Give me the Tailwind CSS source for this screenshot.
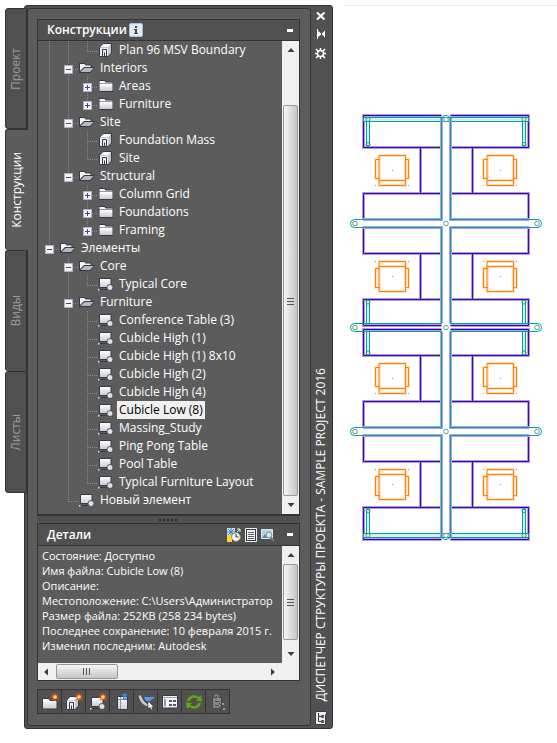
<!DOCTYPE html>
<html lang="ru">
<head>
    <meta charset="UTF-8">
    <meta name="viewport" content="width=device-width, initial-scale=1.0">
    <title>Диспетчер структуры проекта</title>
    <script src="https://cdn.jsdelivr.net/npm/@tailwindcss/browser@4"></script>
</head>
<body class="bg-white font-['Open_Sans','Noto_Sans',sans-serif] text-[12px] leading-[18px] text-white">
    <!-- Icon sprite -->
    <svg class="absolute size-0" aria-hidden="true">
        <defs>
            <linearGradient id="paper" x1="0" y1="0" x2="0" y2="1">
                <stop offset="0" stop-color="#ffffff"/><stop offset="1" stop-color="#c9cbd0"/>
            </linearGradient>
            <!-- Tree guides -->
            <symbol id="g-v" viewBox="0 0 19 18"><path d="M9.5 0V18" stroke="#8a8a8a" stroke-dasharray="1 1"/></symbol>
            <symbol id="g-t" viewBox="0 0 19 18"><path d="M9.5 0V18M10 10.5H19" stroke="#8a8a8a" stroke-dasharray="1 1"/></symbol>
            <symbol id="g-l" viewBox="0 0 19 18"><path d="M9.5 0V11M10 10.5H19" stroke="#8a8a8a" stroke-dasharray="1 1"/></symbol>
            <symbol id="t-minus" viewBox="0 0 9 9"><path d="M.5.5h8v8h-8z" fill="#f4f4f4" stroke="#b4b4b4"/><path d="M2 4.5h5" stroke="#2b4b9b"/></symbol>
            <symbol id="t-plus" viewBox="0 0 9 9"><path d="M.5.5h8v8h-8z" fill="#f4f4f4" stroke="#b4b4b4"/><path d="M2 4.5h5M4.5 2v5" stroke="#2b4b9b"/></symbol>
            <!-- Tree items -->
            <symbol id="i-open" viewBox="0 0 16 16">
                <path d="M0 13V3h6l1 1.500h5.500V7H16l-4.500 6z" fill="#353b47"/>
                <path d="M1 11V4h4.500l1 1.500h5V7H5z" fill="#f4f5f7"/>
                <path d="M5.500 8h9L11 12H1.500z" fill="#b4b8c0"/>
            </symbol>
            <symbol id="i-folder" viewBox="0 0 16 16">
                <path d="M1 2h6l1 1.500h7V14H1z" fill="#353b47"/>
                <path d="M1.500 3h5l1 1.500H14.500V5.500h-13z" fill="#f8f8f8"/>
                <path d="M1.500 6h13v7h-13z" fill="url(#paper)"/>
            </symbol>
            <symbol id="i-building" viewBox="0 0 16 16">
                <path d="M1.500 14.500V5.500L5 1.500h8.500V11L10 14.500z" fill="#c4c7cd" stroke="#353b47"/>
                <path d="M2.500 5L5.300 2.300H12.500L10 5z" fill="#ffffff"/>
                <path d="M2 6h8v8H2z" fill="#eceef1"/>
                <path d="M4.500 14V7.500h4V14M6.500 14v-3.500" fill="none" stroke="#353b47"/>
            </symbol>
            <symbol id="i-element" viewBox="0 0 16 16">
                <path d="M1.500 2.500h11.500v9h-11.500z" fill="url(#paper)" stroke="#353b47"/>
                <path d="M0 13.500h9" stroke="#353b47"/><path d="M0 13h1.500v1.500H0z" fill="#e8e8e8"/>
                <circle cx="12" cy="11.500" r="3" fill="#dfe1e5" stroke="#353b47" stroke-width=".8"/>
            </symbol>
            <symbol id="i-spark" viewBox="0 0 8 8">
                <path d="M4 0v8M0 4h8M1 1l6 6M7 1L1 7" stroke="#f0501c" stroke-width="1.200"/>
                <circle cx="4" cy="4" r="1.800" fill="#ffe94d"/>
            </symbol>
            <!-- Scroll arrow, pointing up -->
            <symbol id="i-arrow" viewBox="0 0 8 8"><path d="M4 2l3.500 4h-7z" fill="#3c3c3c"/></symbol>
            <symbol id="i-grip" viewBox="0 0 8 8"><path d="M0 1.500h7M0 4.500h7M0 7.500h7" stroke="#555"/></symbol>

            <!-- Floor plan: chair, desks and walls of the upper half -->
            <path id="chair" fill="none" stroke-linecap="square" d="M379.500 155.500h26v30h-26zM379.500 180.500h26M379.500 159.500h-4v19h4M405.500 159.500h3v19h-3"/>
            <g id="chair-set">
                <use href="#chair" stroke="#ffe3c8" stroke-width="3"/>
                <use href="#chair" stroke="#ff7f00"/>
                <path d="M375 185h1v1h-1zM408 185h1v1h-1zM392 170h1v1h-1z" fill="#ff7f00"/>
            </g>
            <path id="desks" fill="none" d="M441.500 115.500H363.500V147.500H441.500M420.500 147.500V193.500M441.500 193.500H363.500V219.500M363.500 227.500V253.500H441.500M420.500 253.500V299.500M441.500 299.500H363.500V325.500H441.500"/>
            <path id="desks-right" fill="none" d="M450.500 115.500H528.500V147.500H450.500M472.500 147.500V193.500M450.500 193.500H528.500V219.500M528.500 227.500V253.500H450.500M472.500 253.500V299.500M450.500 299.500H528.500V325.500H450.500"/>
            <path id="walls" fill="none" d="M441.500 118V219.500H354.500M441.500 323.500V227.500H354.500M450.500 118V219.500H538.500M450.500 323.500V227.500H538.500"/>
            <path id="end-caps" fill="none" stroke="#00a0a0" d="M354.500 219.500q-4 0-4 4t4 4M537.500 219.500q4 0 4 4t-4 4"/>
            <g id="joints" fill="#ffffff" stroke="#4fa583">
                <circle cx="355" cy="223.500" r="2.300"/><circle cx="446" cy="223.500" r="2.300"/><circle cx="537" cy="223.500" r="2.300"/>
            </g>
            <g id="posts" fill="#d4efef" stroke="#00a0a0">
                <path d="M366.500 121.500h3v24h-3zM522.500 121.500h3v24h-3z"/>
                <path d="M366.500 300.500h3v23h-3zM522.500 300.500h3v23h-3z"/>
                <path d="M363.500 117.500h165v4h-165z"/>
                <g fill="none" stroke="#3f9c80">
                    <circle cx="368" cy="119.500" r="2"/><circle cx="524" cy="119.500" r="2"/>
                    <circle cx="368" cy="144.500" r="2"/><circle cx="524" cy="144.500" r="2"/>
                    <circle cx="368" cy="302" r="2"/><circle cx="524" cy="302" r="2"/>
                </g>
            </g>
            <g id="plan-half">
                <use href="#desks" stroke="#a8a0e4" stroke-width="3"/>
                <use href="#desks-right" stroke="#a8a0e4" stroke-width="3"/>
                <use href="#desks" stroke="#4800a4"/>
                <use href="#desks-right" stroke="#4800a4"/>
                <use href="#posts"/>
                <path d="M442 122h8v202h-8z" fill="#ffffff"/>
                <path d="M441.500 118V219.500H363M441.500 323.500V227.500H363M450.500 118V219.500H529M450.500 323.500V227.500H529" fill="none" stroke="#a0a8e4" stroke-width="3"/>
                <use href="#walls" stroke="#1c94ac"/>
                <path d="M363.500 323.500H441.500M450.500 323.500H528.500" stroke="#00a0a0"/>
                <use href="#end-caps"/>
                <use href="#joints"/>
                <path d="M442.500 117.500q0-2 3.500-2t3.500 2" fill="none" stroke="#00a0a0"/>
                <circle cx="446" cy="119.500" r="2.300" fill="#fff" stroke="#4fa583"/>
            </g>
        </defs>
    </svg>

    <div class="flex h-screen min-h-[560px] pt-[5px] pb-[14px] pl-[5px]">
        <!-- Side tabs -->
        <nav class="relative z-10 mt-[3px] -mr-[3px] flex w-[22px] shrink-0 flex-col" aria-label="Вкладки">
            <button type="button" class="flex h-[121px] items-center justify-center rounded-l-[3px] border border-[#333] bg-[#505050] text-[#9c9c9c]"><span class="rotate-180 [writing-mode:vertical-rl]">Проект</span></button>
            <button type="button" class="flex h-[121px] items-center justify-center rounded-l-[3px] border-t border-l border-[#333] bg-[#5c5c5c] -mr-[1px]"><span class="rotate-180 [writing-mode:vertical-rl]">Конструкции</span></button>
            <button type="button" class="flex h-[121px] items-center justify-center rounded-l-[3px] border border-b-0 border-[#333] bg-[#505050] text-[#9c9c9c]"><span class="rotate-180 [writing-mode:vertical-rl]">Виды</span></button>
            <button type="button" class="flex h-[122px] items-center justify-center rounded-l-[3px] border border-[#333] bg-[#505050] text-[#9c9c9c]"><span class="rotate-180 [writing-mode:vertical-rl]">Листы</span></button>
        </nav>

        <!-- Palette -->
        <div class="flex w-[309px] shrink-0 rounded-[3px] border border-[#333] bg-[#515151]">
            <div class="my-[2px] ml-[2px] flex min-w-0 flex-1 flex-col rounded-[3px] border border-[#333] bg-[#5c5c5c] pt-[10px] pr-[10px] pb-[11px] pl-[9px]">
                <!-- Constructs tree -->
                <section class="flex min-h-0 flex-1 flex-col border border-b-2 border-[#333]">
                    <header class="flex h-[21px] shrink-0 items-center border-b border-[#333] bg-[#505050] pr-[6px] pl-[9px]">
                        <h2 class="font-semibold">Конструкции</h2>
                        <button type="button" aria-label="Сведения" class="ml-[2px] flex size-[14px] items-center justify-center rounded-[2px] border border-[#9fc3e4] bg-[#e3eaf1]">
                            <svg class="size-[10px]" viewBox="0 0 10 10"><path d="M4 1h2v2H4zM3 4h3v4h1v1H3V8h1V5H3z" fill="#444"/></svg>
                        </button>
                        <button type="button" aria-label="Свернуть" class="ml-auto h-[3px] w-[6px] bg-white"></button>
                    </header>
                    <div class="flex min-h-0 flex-1">
                        <ul id="tree" role="tree" class="min-w-0 flex-1 overflow-hidden pl-[2px]"></ul>
                        <div class="flex w-[17px] flex-col items-center bg-[#f0f0f0]">
                            <svg class="mt-[5px] size-[8px]"><use href="#i-arrow"/></svg>
                            <div class="mt-[51px] flex w-[15px] flex-1 items-center justify-center rounded-[2px] border border-[#979797] bg-linear-to-r from-[#f6f6f6] to-[#c6c6ca]">
                                <svg class="size-[8px]"><use href="#i-grip"/></svg>
                            </div>
                            <svg class="my-[5px] size-[8px] rotate-180"><use href="#i-arrow"/></svg>
                        </div>
                    </div>
                </section>

                <!-- Splitter -->
                <div class="flex h-[7px] shrink-0 items-center justify-center bg-[#505050]">
                    <svg class="h-[2px] w-[20px]"><path d="M0 1H20" stroke="#2c2c2c" stroke-width="2" stroke-dasharray="2 2"/></svg>
                </div>

                <!-- Details -->
                <section class="shrink-0 border border-[#333]">
                    <header class="flex h-[22px] items-center border-b border-[#333] bg-[#505050] pr-[6px] pl-[9px]">
                        <h2 class="font-semibold">Детали</h2>
                        <div class="mr-[12px] ml-auto flex gap-[3px]">
                            <button type="button" aria-label="Внешние ссылки">
                                <svg class="size-[14px]" viewBox="0 0 14 14">
                                    <path d="M0 0h8v8H0z" fill="#d5e6f2"/><path d="M4 0v8M0 4h8M1 1l6 6M7 1L1 7" stroke="#3e82b4"/>
                                    <path d="M0 8l2-1.500 3 1V14H0z" fill="#ffd52e"/>
                                    <path d="M10 1h3v3M13 1l-3 3" stroke="#eee" fill="none"/>
                                    <circle cx="9" cy="9" r="4.300" fill="#fff" stroke="#8c8c8c"/><path d="M9 6v3h2.500" stroke="#222" fill="none"/>
                                </svg>
                            </button>
                            <button type="button" aria-label="Сведения о файле">
                                <svg class="size-[14px]" viewBox="0 0 14 14"><path d="M1.500.5h11v13h-11z" fill="#343a46" stroke="#f2f2f2"/><path d="M3 2h8v10H3z" fill="#f4f4f4"/><path d="M4 4.500h6M4 6.500h6M4 8.500h6M4 10.500h6" stroke="#555c68"/></svg>
                            </button>
                            <button type="button" aria-label="Просмотр">
                                <svg class="size-[14px]" viewBox="0 0 14 14"><path d="M.5 1.500h11v9H.5z" fill="#b6d3e6" stroke="#e6e6e6"/><path d="M1 10l3-4 3 4z" fill="#5688a8"/><path d="M9 9l4 4" stroke="#66769c" stroke-width="2"/><circle cx="8" cy="7" r="2.800" fill="#d8ecf6" stroke="#83939f"/></svg>
                            </button>
                        </div>
                        <button type="button" aria-label="Свернуть" class="h-[3px] w-[6px] bg-white"></button>
                    </header>
                    <div class="flex h-[117px]">
                        <div class="min-w-0 flex-1 overflow-hidden pt-[2px] pl-[4px] text-[11px] leading-[15px] whitespace-nowrap">
                            <p>Состояние: Доступно</p>
                            <p>Имя файла: Cubicle Low (8)</p>
                            <p>Описание:</p>
                            <p>Местоположение: C:\Users\Администратор</p>
                            <p>Размер файла: 252KB (258 234 bytes)</p>
                            <p>Последнее сохранение: 10 февраля 2015 г.</p>
                            <p>Изменил последним: Autodesk</p>
                        </div>
                        <div class="flex w-[17px] shrink-0 flex-col items-center bg-[#f0f0f0]">
                            <svg class="mt-[5px] size-[8px]"><use href="#i-arrow"/></svg>
                            <div class="mt-[5px] flex w-[15px] flex-1 items-center justify-center rounded-[2px] border border-[#979797] bg-linear-to-r from-[#f6f6f6] to-[#c6c6ca]">
                                <svg class="size-[8px]"><use href="#i-grip"/></svg>
                            </div>
                            <svg class="mt-[10px] mb-[5px] size-[8px] rotate-180"><use href="#i-arrow"/></svg>
                        </div>
                    </div>
                    <div class="flex h-[17px] items-center bg-[#f0f0f0] pr-[22px] pl-[4px]">
                        <svg class="size-[8px] -rotate-90"><use href="#i-arrow"/></svg>
                        <div class="ml-[6px] flex h-[15px] w-[62px] items-center justify-center rounded-[2px] border border-[#979797] bg-linear-to-b from-[#f6f6f6] to-[#c6c6ca]">
                            <svg class="size-[8px] rotate-90"><use href="#i-grip"/></svg>
                        </div>
                        <svg class="ml-auto size-[8px] rotate-90"><use href="#i-arrow"/></svg>
                    </div>
                </section>

                <!-- Toolbar -->
                <div class="mt-[8px] flex shrink-0" role="toolbar">
                    <button type="button" aria-label="Добавить категорию" class="flex h-[25px] w-[25px] items-center justify-center border border-[#333] bg-[#515151] -mr-[1px]">
                        <svg class="size-[18px]" viewBox="0 0 18 18"><path d="M1.500 5.500h6l1.500 2h7V16H1.500z" fill="url(#paper)" stroke="#353b47"/><path d="M2 8.500h7" stroke="#fff"/><use href="#i-spark" x="10" y="0" width="8" height="8"/></svg>
                    </button>
                    <button type="button" aria-label="Добавить конструкцию" class="flex h-[25px] w-[25px] items-center justify-center border border-[#333] bg-[#515151] -mr-[1px]">
                        <svg class="size-[18px]" viewBox="0 0 18 18"><use href="#i-building" x="0" y="2" width="16" height="16"/><use href="#i-spark" x="10" y="0" width="8" height="8"/></svg>
                    </button>
                    <button type="button" aria-label="Добавить элемент" class="flex h-[25px] w-[25px] items-center justify-center border border-[#333] bg-[#515151] -mr-[1px]">
                        <svg class="size-[18px]" viewBox="0 0 18 18"><use href="#i-element" x="1" y="2" width="16" height="16"/><use href="#i-spark" x="10" y="0" width="8" height="8"/></svg>
                    </button>
                    <button type="button" aria-label="Внешняя ссылка" class="flex h-[25px] w-[25px] items-center justify-center border border-[#333] bg-[#515151] -mr-[1px]">
                        <svg class="size-[18px]" viewBox="0 0 18 18"><path d="M4.500 3.500h10v13h-10z" fill="url(#paper)" stroke="#353b47"/><path d="M7.500 4v12" stroke="#8d939d"/><path d="M5 6.500h9" stroke="#8d939d"/><path d="M10.500 7V1.500H13V6H10.500" fill="none" stroke="#3d8bf0" stroke-width="1.500"/></svg>
                    </button>
                    <button type="button" aria-label="Выбрать" class="flex h-[25px] w-[25px] items-center justify-center border border-[#333] bg-[#515151] -mr-[1px]">
                        <svg class="size-[18px]" viewBox="0 0 18 18"><path d="M1 2l3 0 3 6 5 4-1 2C5 12 2 8 1 2z" fill="#c9ced6" stroke="#353b47" stroke-width=".7"/><path d="M7 4h10v2h-2l-3 3-1-1-2 0z" fill="#5b9af5"/><path d="M11 8v8l2-1.500L14.500 17l1.500-.7-1.300-2.300H17z" fill="#fff" stroke="#333" stroke-width=".7"/></svg>
                    </button>
                    <button type="button" aria-label="Свойства" class="flex h-[25px] w-[25px] items-center justify-center border border-[#333] bg-[#515151] -mr-[1px]">
                        <svg class="size-[18px]" viewBox="0 0 18 18"><path d="M1.500 2.500h15v12.500h-15z" fill="#f2f3f5" stroke="#353b47"/><path d="M2 4.500h14" stroke="#98a0ac"/><path d="M4 6v7.500" stroke="#9299a5" stroke-width="2"/><path d="M8 7h3v2H8zM12 7h3v2h-3zM8 11h3v2H8zM12 11h3v2h-3z" fill="#525a68"/></svg>
                    </button>
                    <button type="button" aria-label="Обновить" class="flex h-[25px] w-[25px] items-center justify-center border border-[#333] bg-[#515151] -mr-[1px]">
                        <svg class="size-[18px]" viewBox="0 0 18 18"><path d="M2 8C3 2 10 1 13.500 4L16 2.500 17 8.500l-6-.5 2-2C10 4 6 4 5 8zM16 10c-1 6-8 7-11.500 4L2 15.500 1 9.500l6 .5-2 2c3 2 7 2 8-2z" fill="#5dab12"/></svg>
                    </button>
                    <button type="button" aria-label="Отсоединить" class="flex h-[25px] w-[25px] items-center justify-center border border-[#333] bg-[#515151]">
                        <svg class="size-[18px]" viewBox="0 0 18 18"><path d="M3.500 4.500h9v11h-9z" fill="#858585" stroke="#484848"/><path d="M6 4V2h3v6" fill="none" stroke="#999"/><path d="M6 8.500h4M6 12.500h4M10 10l6 6M10 15l5-3" stroke="#484848"/><path d="M13 10h2v2h-2zM14 15h2v2h-2z" fill="#999"/></svg>
                    </button>
                </div>
            </div>

            <!-- Palette title strip -->
            <div class="flex w-[21px] shrink-0 flex-col items-center pt-[5px] pr-[2px] pb-[2px]">
                <button type="button" aria-label="Закрыть"><svg class="size-[10px]" viewBox="0 0 10 10"><path d="M1 1.500l7.500 7M8.500 1.500L1 8.500" stroke="#fff" stroke-width="2"/></svg></button>
                <button type="button" aria-label="Автоскрытие" class="mt-[8px]"><svg class="size-[10px]" viewBox="0 0 10 10"><path d="M1 0h1v10H1zM2 2.500h1l2 2v1L3 7.500H2zM9 1.500v7L6 5.500v-1z" fill="#fff"/></svg></button>
                <button type="button" aria-label="Свойства" class="mt-[9px]"><svg class="size-[11px]" viewBox="0 0 11 11"><path d="M5.500 0v11M0 5.500h11M1 1l9 9M10 1l-9 9" stroke="#fff" stroke-width="1.500"/><circle cx="5.500" cy="5.500" r="3" fill="#515151" stroke="#fff" stroke-width="1.500"/></svg></button>
                <h1 class="mt-auto rotate-180 whitespace-nowrap [writing-mode:vertical-rl]">ДИСПЕТЧЕР СТРУКТУРЫ ПРОЕКТА - SAMPLE PROJECT 2016</h1>
                <svg class="mt-[9px] h-[16px] w-[12px]" viewBox="0 0 12 16"><path d="M.5 1.500h11v3h-1v10H.5z" fill="#eceef1" stroke="#353b47"/><path d="M3.500 3v8.500M3.500 6.500H6M3.500 11.500H6" stroke="#353b47" fill="none"/><path d="M6 5h3v3H6zM6 10h3v3H6z" fill="#525a68"/></svg>
            </div>
        </div>

        <!-- Drawing -->
        <main class="min-w-0 flex-1">
            <svg class="h-auto w-full" viewBox="333 5 224 560" role="img" aria-label="Cubicle Low (8)">
                <path d="M343 5.500H557" stroke="#eeeeee"/>
                <use href="#plan-half"/>
                <use href="#plan-half" transform="matrix(1 0 0 -1 0 655)"/>
                <path d="M354.500 323.500q-4 0-4 4t4 4M354.500 323.500h9M354.500 331.500h9M537.500 323.500q4 0 4 4t-4 4M537.500 323.500h-9M537.500 331.500h-9" fill="none" stroke="#00a0a0"/>
                <use href="#joints" y="104"/>
                <use href="#chair-set"/>
                <use href="#chair-set" x="108"/>
                <use href="#chair-set" y="208"/>
                <use href="#chair-set" x="108" y="208"/>
                <use href="#chair-set" transform="matrix(1 0 0 -1 0 447)"/>
                <use href="#chair-set" transform="matrix(1 0 0 -1 108 447)"/>
                <use href="#chair-set" transform="matrix(1 0 0 -1 0 655)"/>
                <use href="#chair-set" transform="matrix(1 0 0 -1 108 655)"/>
            </svg>
        </main>
    </div>

    <script>
        // guides per row: v = line, t = branch, l = last branch, - / + = toggle with more
        // siblings below, m / p = toggle on the last sibling, space = empty
        const TREE = [
            ['vvl', 'building', 'Plan 96 MSV Boundary'],
            ['v-', 'open', 'Interiors'],
            ['vv+', 'folder', 'Areas'],
            ['vvp', 'folder', 'Furniture'],
            ['v-', 'open', 'Site'],
            ['vvt', 'building', 'Foundation Mass'],
            ['vvl', 'building', 'Site'],
            ['vm', 'open', 'Structural'],
            ['v +', 'folder', 'Column Grid'],
            ['v +', 'folder', 'Foundations'],
            ['v p', 'folder', 'Framing'],
            ['m', 'open', 'Элементы'],
            [' -', 'open', 'Core'],
            [' vl', 'element', 'Typical Core'],
            [' -', 'open', 'Furniture'],
            [' vt', 'element', 'Conference Table (3)'],
            [' vt', 'element', 'Cubicle High (1)'],
            [' vt', 'element', 'Cubicle High (1) 8x10'],
            [' vt', 'element', 'Cubicle High (2)'],
            [' vt', 'element', 'Cubicle High (4)'],
            [' vt', 'element', 'Cubicle Low (8)', true],
            [' vt', 'element', 'Massing_Study'],
            [' vt', 'element', 'Ping Pong Table'],
            [' vt', 'element', 'Pool Table'],
            [' vl', 'element', 'Typical Furniture Layout'],
            [' l', 'element', 'Новый элемент']
        ];

        const line = id => `<svg class="h-[18px] w-[19px] shrink-0"><use href="#g-${id}"/></svg>`;
        const toggle = (id, lineId, name) => `
            <button type="button" aria-label="${name}" class="grid h-[18px] w-[19px] shrink-0">
                <svg class="col-start-1 row-start-1 h-[18px] w-[19px]"><use href="#g-${lineId}"/></svg>
                <svg class="col-start-1 row-start-1 mt-[6px] ml-[5px] size-[9px]"><use href="#t-${id}"/></svg>
            </button>`;

        function guide(c, name) {
            switch (c) {
                case ' ': return '<span class="w-[19px] shrink-0"></span>';
                case '-': return toggle('minus', 't', name);
                case 'm': return toggle('minus', 'l', name);
                case '+': return toggle('plus', 't', name);
                case 'p': return toggle('plus', 'l', name);
                default: return line(c);
            }
        }

        document.getElementById('tree').innerHTML = TREE.map(([guides, icon, name, selected]) => `
            <li role="treeitem" class="flex h-[18px] items-center whitespace-nowrap">
                ${[...guides].map(c => guide(c, name)).join('')}
                <svg class="ml-[1px] size-[16px] shrink-0"><use href="#i-${icon}"/></svg>
                <span class="${selected ? 'ml-[3px] bg-[#f0f0f0] px-[2px] text-black' : 'ml-[3px] px-[2px]'}">${name}</span>
            </li>`).join('');
    </script>
</body>
</html>
